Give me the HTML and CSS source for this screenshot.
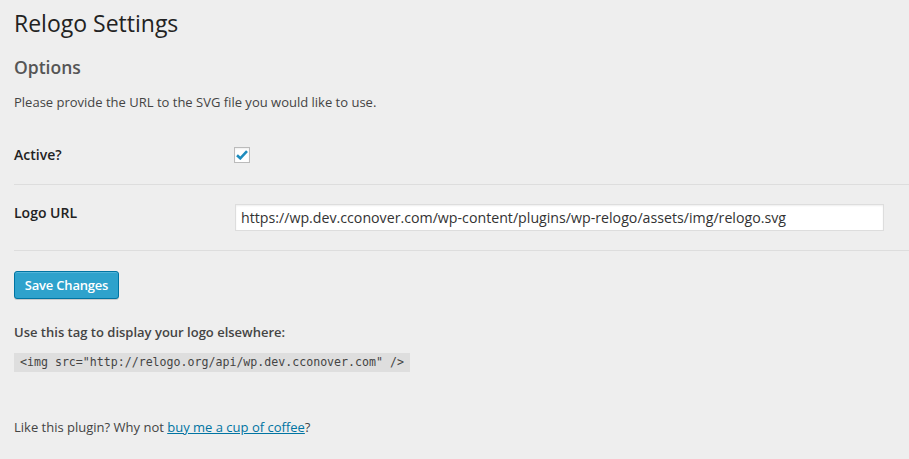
FILE: index.html
```html
<!DOCTYPE html>
<html>
<head>
<meta charset="utf-8">
<title>Relogo Settings</title>
<link rel="stylesheet" href="styles.css">
</head>
<body>
<div class="wrap">
  <h1 class="page-title">Relogo Settings</h1>
  <h2 class="section-title">Options</h2>
  <p class="intro">Please provide the URL to the SVG file you would like to use.</p>

  <div class="form-table">
    <div class="form-row row-active">
      <div class="row-label">Active?</div>
      <div class="row-field">
        <span class="checkbox">
          <svg width="12" height="10" viewBox="0 0 12 10"><path d="M1 5.2 L4.3 8.3 L11 1.2" fill="none" stroke="#1e8cbe" stroke-width="2.6" stroke-linecap="butt" stroke-linejoin="miter"/></svg>
        </span>
      </div>
    </div>
    <div class="form-row row-url">
      <div class="row-label">Logo URL</div>
      <div class="row-field">
        <input class="text-input" type="text" value="https://wp.dev.cconover.com/wp-content/plugins/wp-relogo/assets/img/relogo.svg">
      </div>
    </div>
  </div>

  <button class="button-primary" type="button">Save Changes</button>

  <p class="tag-label">Use this tag to display your logo elsewhere:</p>
  <code class="tag-code">&lt;img src="http://relogo.org/api/wp.dev.cconover.com" /&gt;</code>

  <p class="footer-note">Like this plugin? Why not <a href="#">buy me a cup of coffee</a>?</p>
</div>
</body>
</html>
```

FILE: styles.css
```css
html, body {
  margin: 0;
  padding: 0;
  background: #eeeeee;
}
body {
  font-family: "Open Sans", "Noto Sans", sans-serif;
  font-size: 13px;
  color: #444;
}
.wrap {
  padding: 9px 0 0 14px;
}
.page-title {
  margin: 0;
  font-size: 23px;
  line-height: 29px;
  font-weight: 400;
  color: #222;
}
.section-title {
  margin: 17px 0 0;
  font-size: 17.5px;
  line-height: 24px;
  font-weight: 600;
  color: #555;
}
.intro {
  margin: 14px 0 0;
  line-height: 19.5px;
  color: #444;
}
.form-table {
  margin-top: 13px;
}
.form-row {
  display: flex;
  align-items: flex-start;
  border-bottom: 1px solid #dddddd;
}
.row-active { height: 58px; }
.row-url { height: 65px; }
.row-label {
  width: 220px;
  font-size: 14px;
  line-height: 20px;
  font-weight: 600;
  color: #222;
}
.row-active .row-label { padding-top: 19px; }
.row-url .row-label { padding-top: 18px; }
.row-field { flex: 1; }
.checkbox {
  display: flex;
  align-items: center;
  justify-content: center;
  box-sizing: border-box;
  width: 16px;
  height: 16px;
  margin-top: 21px;
  background: #fff;
  border: 1px solid #bbbbbb;
  box-shadow: inset 0 1px 2px rgba(0,0,0,.07);
}
.checkbox svg { display: block; margin-top: 1px; }
.text-input {
  display: block;
  box-sizing: border-box;
  margin: 19px 0 0 1px;
  width: 649px;
  height: 27px;
  padding: 3px 5px;
  border: 1px solid #dddddd;
  background: #fff;
  font-family: "Open Sans", "Noto Sans", sans-serif;
  font-size: 14.2px;
  color: #333;
  box-shadow: inset 0 1px 2px rgba(0,0,0,.07);
  outline: none;
}
.button-primary {
  display: block;
  margin-top: 20px;
  box-sizing: border-box;
  height: 28px;
  width: 105px;
  padding: 0 0 1px;
  white-space: nowrap;
  text-align: center;
  border: 1px solid #0074a2;
  border-radius: 3px;
  background: #2ea2cc;
  color: #fff;
  font-family: "Open Sans", "Noto Sans", sans-serif;
  font-size: 13px;
  font-weight: 600;
  letter-spacing: -0.2px;
  line-height: 26px;
  box-shadow: inset 0 1px 0 rgba(120,200,230,.5), 0 1px 0 rgba(0,0,0,.15);
  cursor: pointer;
}
.tag-label {
  margin: 24px 0 0;
  line-height: 19.5px;
  font-weight: 600;
  color: #444;
}
.tag-code {
  display: inline-block;
  margin-top: 11px;
  height: 19px;
  line-height: 19px;
  padding: 0 6px;
  background: #dedede;
  font-family: "DejaVu Sans Mono", "Liberation Mono", monospace;
  font-size: 11.6px;
  color: #444;
}
.footer-note {
  margin: 46px 0 0;
  line-height: 19.5px;
  color: #444;
}
.footer-note a {
  color: #0074a2;
  text-decoration: underline;
}
```
